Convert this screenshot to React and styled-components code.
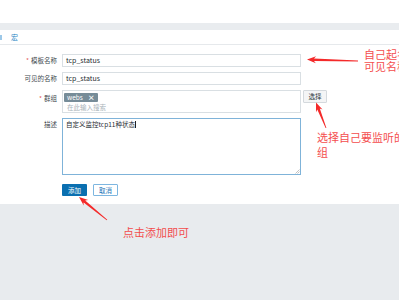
import React from "react";
import styled, { createGlobalStyle } from "styled-components";

const Global = createGlobalStyle`
  html, body { margin: 0; padding: 0; }
  body {
    background: #e8ebee;
    font-family: "Noto Sans CJK SC", "Noto Sans", "Liberation Sans", sans-serif;
    width: 399px;
    height: 300px;
    overflow: hidden;
  }
`;

const Page = styled.div`
  position: relative;
  width: 399px;
  height: 300px;
  overflow: hidden;
  display: flex;
  flex-direction: column;
`;

const TopBar = styled.div`
  height: 23px;
  background: #fff;
`;

const Strip = styled.div`
  height: 7px;
  background: #e9ecef;
`;

const TabBar = styled.div`
  height: 14px;
  background: #fff;
  border-bottom: 1px solid #e6e9ec;
  display: flex;
  align-items: center;
  gap: 9px;
  font-size: 7px;
  color: #2b86c5;
`;

const TabEdge = styled.span`
  width: 2px;
  height: 5px;
  background: #9cc8e8;
`;

const FormPanel = styled.div`
  background: #fff;
  padding: 9px 0 8px 0;
  display: grid;
  grid-template-columns: 57px 239px auto;
  column-gap: 5px;
  row-gap: 5px;
  align-items: start;
`;

const Label = styled.div`
  font-size: 6.5px;
  color: #3f4a50;
  text-align: right;
  line-height: ${p => p.$lh || 13}px;
  white-space: nowrap;
`;

const Req = styled.span`
  color: #e45959;
  margin-right: 2px;
`;

const Input = styled.div`
  box-sizing: border-box;
  height: 13px;
  border: 1px solid #d9dfe3;
  font-size: 7px;
  line-height: 11px;
  padding-left: 3px;
  color: #1f2c33;
`;

const MultiBox = styled.div`
  box-sizing: border-box;
  height: 23px;
  border: 1px solid #d9dfe3;
  padding: 2px 1px;
  display: flex;
  flex-direction: column;
  gap: 2px;
`;

const Tag = styled.span`
  align-self: flex-start;
  background: #768c98;
  color: #fff;
  font-size: 6.5px;
  line-height: 9px;
  padding: 0 3px;
  display: inline-flex;
  gap: 5px;
  align-items: center;
  border-radius: 1px;
`;

const TagX = styled.span`
  font-weight: bold;
  font-size: 7px;
`;

const Placeholder = styled.span`
  font-size: 6.5px;
  color: #aab4ba;
  line-height: 7px;
  padding-left: 3px;
`;

const SmallButton = styled.div`
  box-sizing: border-box;
  width: 24px;
  height: 13px;
  margin-left: -3px;
  background: #f4f5f6;
  border: 1px solid #d4d9dd;
  border-radius: 1px;
  font-size: 6.5px;
  line-height: 11px;
  text-align: center;
  color: #2c363b;
`;

const TextArea = styled.div`
  box-sizing: border-box;
  height: 57px;
  border: 1px solid #7fb3d9;
  font-size: 6.5px;
  line-height: 11px;
  padding-left: 3px;
  color: #1f2c33;
  position: relative;
`;

const Caret = styled.span`
  display: inline-block;
  width: 1px;
  height: 7px;
  background: #222;
  vertical-align: -1px;
`;

const Grip = styled.svg`
  position: absolute;
  right: 0;
  bottom: 0;
`;

const Actions = styled.div`
  grid-column: 2 / 4;
  display: flex;
  gap: 6px;
  margin-top: 4px;
`;

const Btn = styled.div`
  box-sizing: border-box;
  width: 25px;
  height: 12px;
  font-size: 6.5px;
  line-height: ${p => (p.$primary ? 12 : 10)}px;
  text-align: center;
  border-radius: 1px;
  background: ${p => (p.$primary ? "#0a6fb0" : "#fff")};
  color: ${p => (p.$primary ? "#fff" : "#1d75b8")};
  border: ${p => (p.$primary ? "none" : "1px solid #7db6e0")};
`;

const Empty = styled.div``;

const Overlay = styled.svg`
  position: absolute;
  left: 0;
  top: 0;
  pointer-events: none;
`;

const Note = styled.div`
  position: absolute;
  left: ${p => p.$x}px;
  top: ${p => p.$y}px;
  color: #f43a3a;
  font-size: 11px;
  line-height: 11px;
  white-space: nowrap;
  opacity: 0.9;
`;

function arrow(tip, tail, headLen = 9, headW = 7, shaftW = 2.6, tailW = 0.8) {
  const dx = tail[0] - tip[0];
  const dy = tail[1] - tip[1];
  const len = Math.hypot(dx, dy);
  const ux = dx / len, uy = dy / len;
  const px = -uy, py = ux;
  const b = [tip[0] + ux * headLen, tip[1] + uy * headLen];
  const nb = [tip[0] + ux * (headLen - 2), tip[1] + uy * (headLen - 2)];
  const pts = [
    tip,
    [b[0] + px * headW / 2, b[1] + py * headW / 2],
    [nb[0] + px * shaftW / 2, nb[1] + py * shaftW / 2],
    [tail[0] + px * tailW / 2, tail[1] + py * tailW / 2],
    [tail[0] - px * tailW / 2, tail[1] - py * tailW / 2],
    [nb[0] - px * shaftW / 2, nb[1] - py * shaftW / 2],
    [b[0] - px * headW / 2, b[1] - py * headW / 2],
  ];
  return pts.map(p => p.map(v => v.toFixed(1)).join(",")).join(" ");
}

export default function App() {
  return (
    <>
      <Global />
      <Page>
        <TopBar />
        <Strip />
        <TabBar>
          <TabEdge />
          <span>宏</span>
        </TabBar>
        <FormPanel>
          <Label><Req>*</Req>模板名称</Label>
          <Input>tcp_status</Input>
          <Empty />

          <Label>可见的名称</Label>
          <Input>tcp_status</Input>
          <Empty />

          <Label $lh={16}><Req>*</Req>群组</Label>
          <MultiBox>
            <Tag>webs<TagX>×</TagX></Tag>
            <Placeholder>在此输入搜索</Placeholder>
          </MultiBox>
          <SmallButton>选择</SmallButton>

          <Label $lh={12}>描述</Label>
          <TextArea>
            自定义监控tcp11种状态<Caret />
            <Grip width="5" height="5" viewBox="0 0 5 5">
              <path d="M4.5 0.5 L0.5 4.5 M4.5 2.5 L2.5 4.5" stroke="#999" strokeWidth="0.6" />
            </Grip>
          </TextArea>
          <Empty />

          <Empty />
          <Actions>
            <Btn $primary>添加</Btn>
            <Btn>取消</Btn>
          </Actions>
        </FormPanel>

        <Overlay width="399" height="300" viewBox="0 0 399 300">
          <polygon points={arrow([307, 59.5], [358, 61])} fill="#f42a2a" />
          <polygon points={arrow([316, 102.5], [326, 128])} fill="#f42a2a" />
          <polygon points={arrow([79, 197], [107, 220])} fill="#f42a2a" />
        </Overlay>
        <Note $x={364} $y={49}>自己起名</Note>
        <Note $x={364} $y={61}>可见名称</Note>
        <Note $x={317} $y={132}>选择自己要监听的</Note>
        <Note $x={317} $y={147}>组</Note>
        <Note $x={123} $y={227}>点击添加即可</Note>
      </Page>
    </>
  );
}
